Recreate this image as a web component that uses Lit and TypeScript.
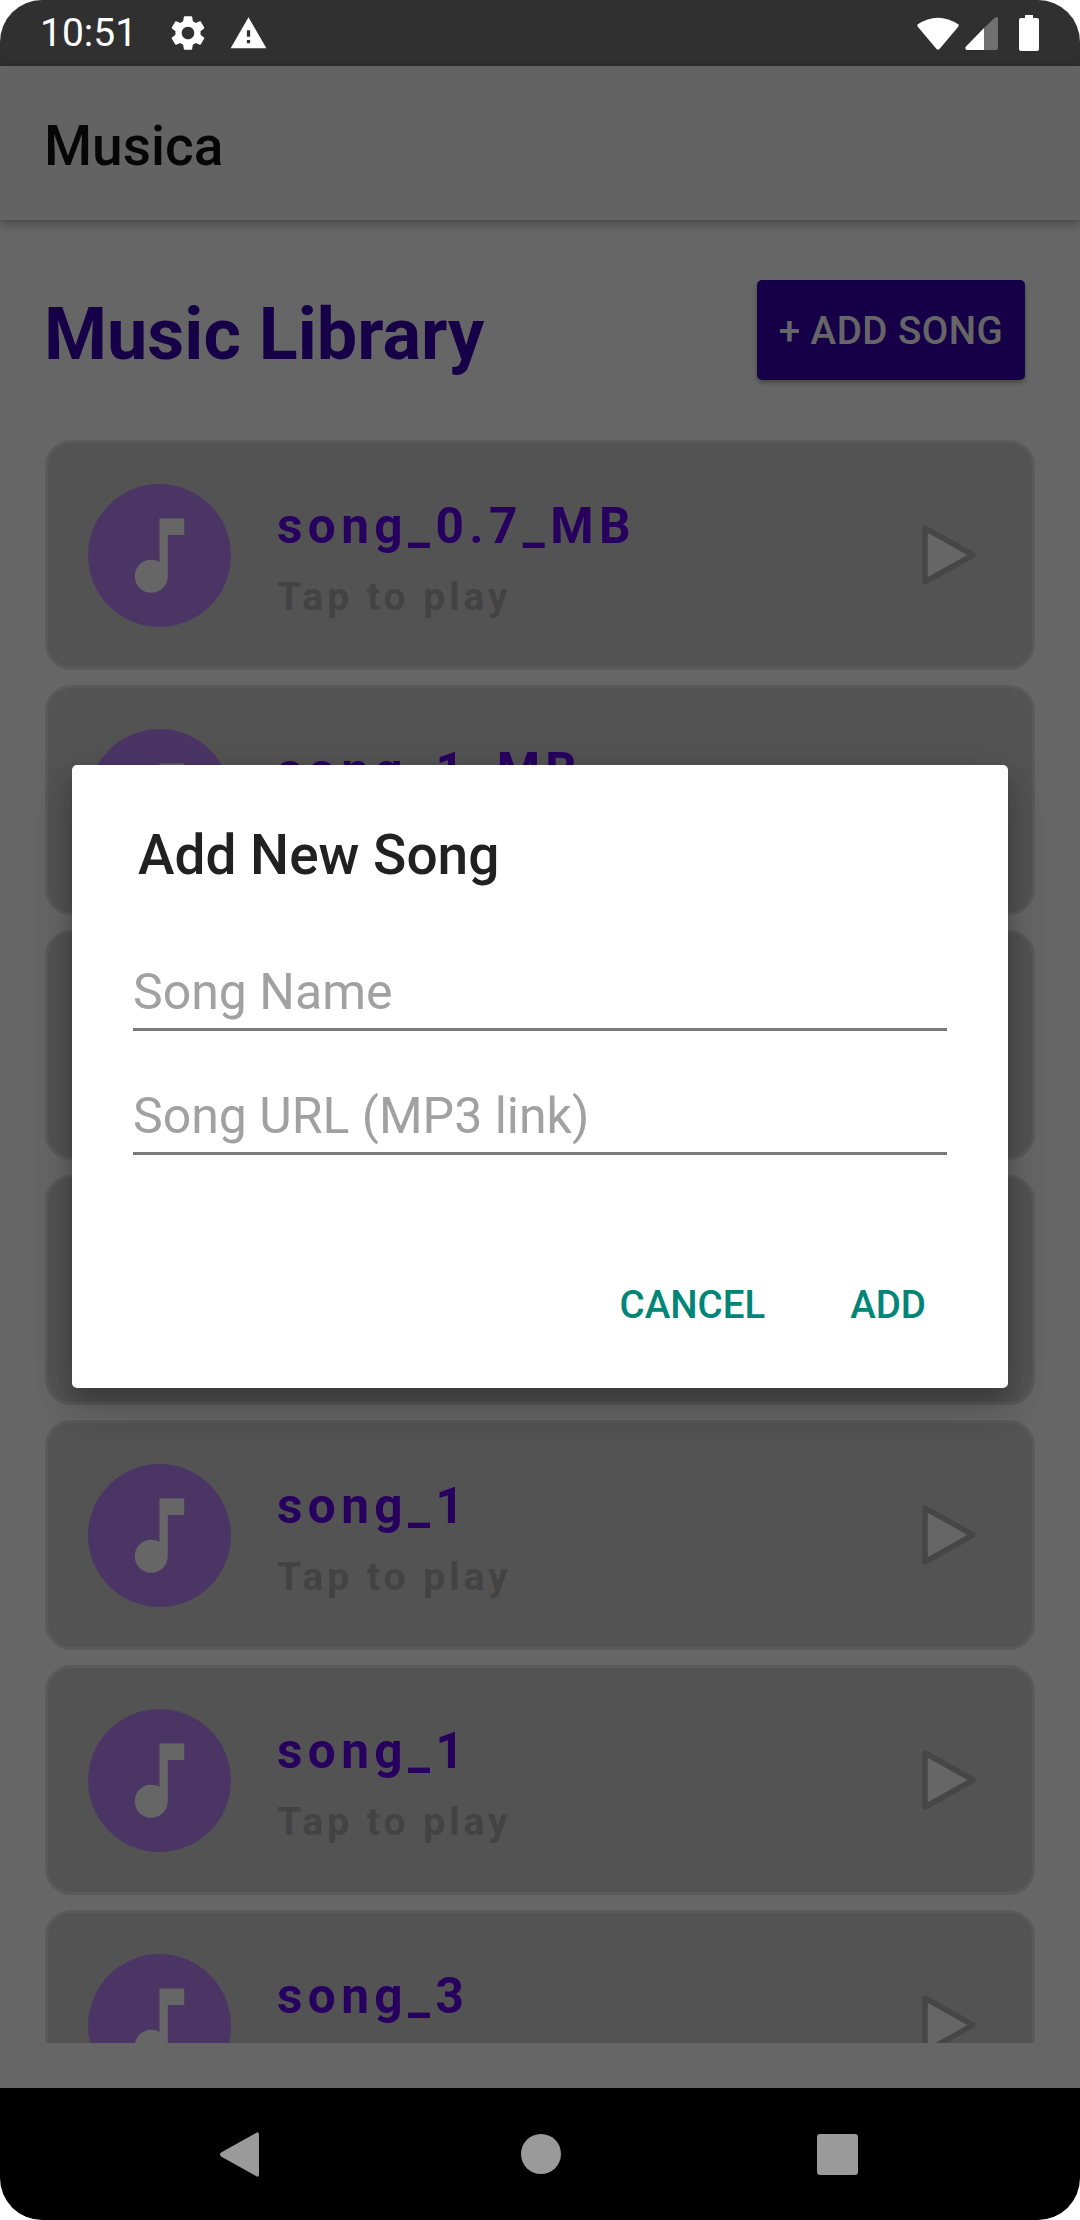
import {LitElement, html, css, svg, nothing} from 'lit';
import {customElement} from 'lit/decorators.js';

// cards 3 and 4 sit fully behind the dialog, their labels never show
const SONGS = ['song_0.7_MB', 'song_1_MB', '', '', 'song_1', 'song_1', 'song_3'];

const GEAR = svg`<path d="M19.14 12.94c.04-.3.06-.61.06-.94 0-.32-.02-.64-.07-.94l2.03-1.58c.18-.14.23-.41.12-.61l-1.92-3.32c-.12-.22-.37-.29-.59-.22l-2.39.96c-.5-.38-1.03-.7-1.62-.94l-.36-2.54c-.04-.24-.24-.41-.48-.41h-3.84c-.24 0-.43.17-.47.41l-.36 2.54c-.59.24-1.13.57-1.62.94l-2.39-.96c-.22-.08-.47 0-.59.22L2.74 8.87c-.12.21-.08.47.12.61l2.03 1.58c-.05.3-.09.63-.09.94s.02.64.07.94l-2.03 1.58c-.18.14-.23.41-.12.61l1.92 3.32c.12.22.37.29.59.22l2.39-.96c.5.38 1.03.7 1.62.94l.36 2.54c.05.24.24.41.48.41h3.84c.24 0 .44-.17.47-.41l.36-2.54c.59-.24 1.13-.56 1.62-.94l2.39.96c.22.08.47 0 .59-.22l1.92-3.32c.12-.22.07-.47-.12-.61l-2.01-1.58zM12 15.6c-1.98 0-3.6-1.62-3.6-3.6s1.62-3.6 3.6-3.6 3.6 1.62 3.6 3.6-1.62 3.6-3.6 3.6z"/>`;
const WARNING = svg`<path d="M1 21h22L12 2 1 21zm12-3h-2v-2h2v2zm0-4h-2v-4h2v4z"/>`;
const NOTE = svg`<path d="M12 3v10.55c-.59-.34-1.27-.55-2-.55-2.21 0-4 1.79-4 4s1.79 4 4 4 4-1.79 4-4V7h4V3h-6z"/>`;

@customElement('app-root')
export class AppRoot extends LitElement {
    static styles = css`
        :host {
            display: block;
            width: 1080px;
            height: 2220px;
            background: #fff;
            font-family: Roboto, "Liberation Sans", sans-serif;
        }
        .screen {
            position: relative;
            display: flex;
            flex-direction: column;
            height: 2220px;
            border-radius: 42px;
            overflow: hidden;
            background: #fff;
        }
        .status {
            flex: none;
            height: 66px;
            display: flex;
            align-items: center;
            background: #303030;
            color: #fff;
            padding-left: 40px;
            box-sizing: border-box;
        }
        .time {
            font-size: 39px;
            line-height: 66px;
            width: 127px;
        }
        .status svg {
            display: block;
            fill: #fff;
        }
        .gear {
            width: 42px;
            height: 42px;
            margin: 0 20px 0 0;
        }
        .warn {
            width: 39px;
            height: 39px;
        }
        .status .right {
            margin-left: auto;
            margin-right: 41px;
            display: flex;
            align-items: center;
        }
        .wifi {
            width: 42px;
            height: 33px;
            margin-right: 6px;
        }
        .signal {
            width: 33px;
            height: 33px;
            margin-right: 21px;
        }
        .battery {
            width: 20px;
            height: 36px;
        }
        .toolbar {
            flex: none;
            height: 154px;
            display: flex;
            align-items: center;
            padding: 5px 0 0 44px;
            box-sizing: border-box;
            background: #f8f8f8;
            box-shadow: 0 3px 10px rgba(0, 0, 0, 0.35);
            font-size: 55px;
            font-weight: 500;
            color: #111;
            position: relative;
        }
        .main {
            flex: none;
            height: 1868px;
            display: flex;
            flex-direction: column;
            box-sizing: border-box;
            padding: 0 45px 45px;
        }
        .head {
            flex: none;
            height: 220px;
            display: flex;
            align-items: center;
            justify-content: space-between;
            box-sizing: border-box;
            padding: 0 10px 0 0;
        }
        .head h1 {
            margin: 8px 0 0 -1px;
            font-size: 72px;
            font-weight: 700;
            color: #3700b3;
        }
        .add {
            width: 268px;
            height: 100px;
            border-radius: 5px;
            background: #3700b3;
            color: #fff;
            font-size: 38.5px;
            font-weight: 500;
            letter-spacing: 0.5px;
            display: flex;
            align-items: center;
            justify-content: center;
            box-shadow: 0 3px 5px rgba(0, 0, 0, 0.3);
        }
        .list {
            flex: 1;
            min-height: 0;
            overflow: hidden;
            display: flex;
            flex-direction: column;
            gap: 15px;
        }
        .card {
            flex: none;
            height: 230px;
            box-sizing: border-box;
            border: 3px solid #e2e2e2;
            border-radius: 26px;
            background: #d0d0d0;
            display: flex;
            align-items: center;
            padding: 0 54px 0 40px;
        }
        .disc {
            flex: none;
            width: 143px;
            height: 143px;
            border-radius: 50%;
            background: #bb86fc;
            display: flex;
            align-items: center;
            justify-content: center;
            margin-right: 46px;
        }
        .disc svg {
            width: 99px;
            height: 99px;
            fill: #fff;
        }
        .info {
            flex: 1;
            min-width: 0;
            display: flex;
            flex-direction: column;
            padding-top: 7px;
        }
        .name {
            font-size: 49.5px;
            font-weight: 700;
            letter-spacing: 5.4px;
            line-height: 56px;
            color: #6200ee;
        }
        .sub {
            font-size: 39px;
            font-weight: 700;
            letter-spacing: 4px;
            line-height: 46px;
            margin-top: 20px;
            color: #a8a8a8;
        }
        .play {
            flex: none;
            width: 56px;
            height: 62px;
        }
        .play path {
            fill: #fff;
            stroke: #b0b0b0;
            stroke-width: 5.5;
            stroke-linejoin: round;
        }
        .scrim {
            position: absolute;
            left: 0;
            right: 0;
            top: 66px;
            bottom: 132px;
            background: rgba(0, 0, 0, 0.6);
        }
        .dialog {
            position: absolute;
            left: 72px;
            top: 765px;
            width: 936px;
            height: 623px;
            box-sizing: border-box;
            padding: 0 61px;
            background: #fff;
            border-radius: 5px;
            display: flex;
            flex-direction: column;
            box-shadow: 0 24px 38px rgba(0, 0, 0, 0.12), 0 9px 46px rgba(0, 0, 0, 0.12), 0 11px 15px rgba(0, 0, 0, 0.14);
        }
        .dialog h2 {
            margin: 0;
            padding: 59px 0 0 5px;
            font-size: 55px;
            line-height: 62px;
            font-weight: 500;
            color: #212121;
        }
        .field {
            height: 85px;
            line-height: 92px;
            box-sizing: border-box;
            border-bottom: 3px solid #7a7a7a;
            font-size: 50px;
            color: #a1a1a1;
        }
        .field.first {
            margin-top: 60px;
        }
        .field + .field {
            height: 124px;
            padding-top: 39px;
        }
        .actions {
            margin-top: auto;
            height: 120px;
            display: flex;
            justify-content: flex-end;
            gap: 85px;
            padding-right: 21px;
            font-size: 38.5px;
            font-weight: 500;
            color: #008577;
        }
        .actions span {
            line-height: 74px;
        }
        .nav {
            flex: none;
            position: relative;
            height: 132px;
            background: #000;
            display: flex;
            align-items: center;
            padding-left: 220px;
            z-index: 1;
        }
        .nav .back {
            width: 39px;
            height: 45px;
            fill: #9a9a9a;
            margin-right: 262px;
        }
        .nav .home {
            width: 40px;
            height: 40px;
            border-radius: 50%;
            background: #9a9a9a;
            margin-right: 256px;
        }
        .nav .recent {
            width: 41px;
            height: 41px;
            border-radius: 3px;
            background: #9a9a9a;
        }
    `;

    renderCard(name: string) {
        return html`
            <div class="card">
                <div class="disc"><svg viewBox="0 0 24 24">${NOTE}</svg></div>
                <div class="info">
                    ${name
                        ? html`<div class="name">${name}</div><div class="sub">Tap to play</div>`
                        : nothing}
                </div>
                <svg class="play" viewBox="0 0 56 62"><path d="M3 4 L51 31 L3 58 Z"/></svg>
            </div>
        `;
    }

    render() {
        return html`
            <div class="screen">
                <div class="status">
                    <span class="time">10:51</span>
                    <svg class="gear" viewBox="0 0 24 24">${GEAR}</svg>
                    <svg class="warn" viewBox="0 0 24 24">${WARNING}</svg>
                    <div class="right">
                        <svg class="wifi" viewBox="0 0 42 33"><path d="M0.5 7.5 Q21 -6 41.5 7.5 Q42 8.5 41 10 L22.5 32 Q21 33.500 19.500 32 L1 10 Q0 8.500 0.500 7.500 Z"/></svg>
                        <svg class="signal" viewBox="0 0 33 33"><path d="M0.500 30 L19 11 V33 H2 Q0 33 0.500 30 Z"/><path style="fill:#707070" d="M19 11 L30 0.500 Q33 -1 33 2 V31 Q33 33 31 33 H19 Z"/></svg>
                        <svg class="battery" viewBox="0 0 20 36"><path d="M6 0 H14 V3 H18 Q20 3 20 5 V34 Q20 36 18 36 H2 Q0 36 0 34 V5 Q0 3 2 3 H6 Z"/></svg>
                    </div>
                </div>
                <div class="toolbar">Musica</div>
                <div class="main">
                    <div class="head">
                        <h1>Music Library</h1>
                        <div class="add">+ ADD SONG</div>
                    </div>
                    <div class="list">${SONGS.map((s) => this.renderCard(s))}</div>
                </div>
                <div class="scrim"></div>
                <div class="dialog">
                    <h2>Add New Song</h2>
                    <div class="field first">Song Name</div>
                    <div class="field">Song URL (MP3 link)</div>
                    <div class="actions"><span>CANCEL</span><span>ADD</span></div>
                </div>
                <div class="nav">
                    <svg class="back" viewBox="0 0 39 45"><path d="M36 1 Q39 -1 39 3 V42 Q39 46 36 44 L1 24.500 Q-1 22.500 1 20.500 Z"/></svg>
                    <div class="home"></div>
                    <div class="recent"></div>
                </div>
            </div>
        `;
    }
}
